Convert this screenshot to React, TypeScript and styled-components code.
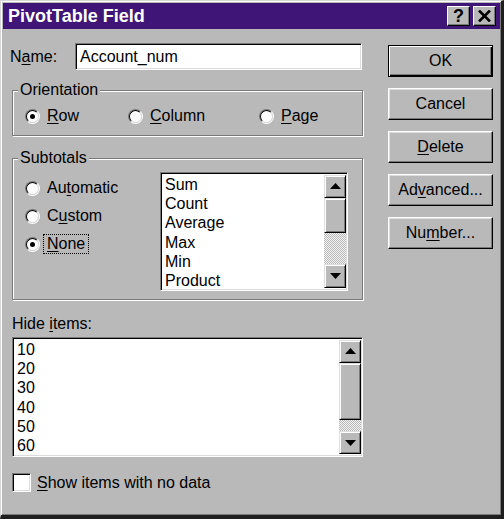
import React from "react";
import styled, { createGlobalStyle, css } from "styled-components";

const GlobalStyle = createGlobalStyle`
  html, body { margin: 0; padding: 0; background: #b9b9b9; }
  body {
    font-family: "Liberation Sans", Arial, sans-serif;
    font-size: 16px;
    color: #000;
  }
  * { box-sizing: border-box; }
`;

const BG = "#b9b9b9";

const Window = styled.div`
  width: 504px;
  height: 519px;
  background: ${BG};
  border-style: solid;
  border-width: 1px 3px 4px 1px;
  border-color: #d8d8d8 #1e1e1e #1e1e1e #d8d8d8;
  box-shadow: inset 1px 1px #fff, inset -1px -1px #7a7a7a;
  padding: 2px 1px 0 2px;
  display: flex;
  flex-direction: column;
`;

const TitleBar = styled.div`
  height: 26px;
  background: #3f1678;
  display: flex;
  align-items: center;
  padding: 0 4px 0 5px;
`;

const TitleText = styled.div`
  flex: 1;
  color: #fff;
  font-weight: bold;
  font-size: 18px;
  line-height: 20px;
`;

const TitleButtons = styled.div`
  display: flex;
  gap: 3px;
`;

const TitleButton = styled.div`
  width: 23px;
  height: 20px;
  background: ${BG};
  border: 1px solid;
  border-color: #fff #000 #000 #fff;
  box-shadow: inset -1px -1px #7a7a7a;
  display: flex;
  align-items: center;
  justify-content: center;
  font-weight: bold;
  font-size: 18px;
  line-height: 1;
`;

const Body = styled.div`
  display: flex;
  padding: 14px 0 0 7px;
`;

const LeftColumn = styled.div`
  width: 356px;
  display: flex;
  flex-direction: column;
`;

const RightColumn = styled.div`
  margin-left: 22px;
  padding-top: 2px;
  display: flex;
  flex-direction: column;
  gap: 11px;
`;

const Button = styled.div<{ $default?: boolean }>`
  width: 105px;
  height: 32px;
  background: ${BG};
  display: flex;
  align-items: center;
  justify-content: center;
  border: 1px solid;
  ${(p) =>
    p.$default
      ? css`
          border-color: #000;
          box-shadow: inset 1px 1px #fff, inset -1px -1px #000, inset -2px -2px #7a7a7a;
        `
      : css`
          border-color: #fff #000 #000 #fff;
          box-shadow: inset -1px -1px #7a7a7a, inset 1px 1px #dedede;
        `}
`;

const U = styled.span`
  text-decoration: underline;
  text-underline-offset: 2px;
`;

const NameRow = styled.div`
  display: flex;
  align-items: center;
  height: 27px;
`;

const NameLabel = styled.span`
  width: 65px;
`;

const sunken = css`
  background: #fff;
  border: 1px solid;
  border-color: #7a7a7a #fff #fff #7a7a7a;
  box-shadow: inset 1px 1px #000, inset -1px -1px #dcdcdc;
`;

const TextInput = styled.div`
  ${sunken};
  width: 287px;
  height: 27px;
  display: flex;
  align-items: center;
  padding-left: 4px;
`;

const Group = styled.fieldset<{ $top: number }>`
  margin: ${(p) => p.$top}px 0 0 2px;
  padding: 0;
  width: 351px;
  min-width: 0;
  border: 1px solid #7a7a7a;
  box-shadow: inset 1px 1px #fff, 1px 1px #fff;
`;

const Legend = styled.legend`
  margin-left: 5px;
  padding: 0 2px;
  line-height: 18px;
  height: 18px;
  background: ${BG};
`;

const OrientationRow = styled.div`
  display: grid;
  grid-template-columns: 103px 131px auto;
  padding: 8px 0 10px 12px;
`;

const SubtotalsInner = styled.div`
  display: flex;
  padding: 5px 0 8px 12px;
`;

const RadioColumn = styled.div`
  width: 135px;
  margin-top: 7px;
  display: flex;
  flex-direction: column;
  gap: 10px;
`;

const Option = styled.div`
  display: flex;
  align-items: center;
  height: 18px;
  gap: 3px;
`;

const RadioCircle = styled.span<{ $checked?: boolean }>`
  position: relative;
  width: 15px;
  height: 15px;
  flex: none;
  border-radius: 50%;
  border: 1px solid;
  border-color: #7a7a7a #fff #fff #7a7a7a;
  &::before {
    content: "";
    position: absolute;
    inset: 0;
    border-radius: 50%;
    border: 1px solid;
    border-color: #000 #dcdcdc #dcdcdc #000;
    background: #fff;
  }
  &::after {
    content: "";
    display: ${(p) => (p.$checked ? "block" : "none")};
    position: absolute;
    left: 4px;
    top: 4px;
    width: 5px;
    height: 5px;
    border-radius: 50%;
    background: #000;
  }
`;

const OptionText = styled.span<{ $focus?: boolean }>`
  padding: 0 3px;
  line-height: 18px;
  border: 1px ${(p) => (p.$focus ? "dotted #000" : "solid transparent")};
`;

const ListBox = styled.div<{ $w: number; $h: number; $ml?: number }>`
  ${sunken};
  width: ${(p) => p.$w}px;
  height: ${(p) => p.$h}px;
  margin-left: ${(p) => p.$ml ?? 0}px;
  display: flex;
  padding: 2px 1px 2px 2px;
  overflow: hidden;
`;

const Items = styled.div`
  flex: 1;
  padding-left: 2px;
  line-height: 19.2px;
`;

const ScrollBar = styled.div`
  width: 22px;
  display: flex;
  flex-direction: column;
`;

const raised = css`
  background: ${BG};
  border: 1px solid;
  border-color: #dedede #000 #000 #dedede;
  box-shadow: inset 1px 1px #fff, inset -1px -1px #7a7a7a;
`;

const ScrollButton = styled.div<{ $h: number }>`
  ${raised};
  height: ${(p) => p.$h}px;
  display: flex;
  align-items: center;
  justify-content: center;
`;

const Thumb = styled.div<{ $h: number }>`
  ${raised};
  height: ${(p) => p.$h}px;
`;

const Track = styled.div<{ $h: number }>`
  height: ${(p) => p.$h}px;
  background: repeating-conic-gradient(#b9b9b9 0% 25%, #f2f2f2 0% 50%) 0 0 / 2px 2px;
`;

const HideLabel = styled.div`
  margin: 15px 0 4px 2px;
  line-height: 18px;
`;

const CheckRow = styled.div`
  margin: 16px 0 0 2px;
  display: flex;
  align-items: center;
  gap: 6px;
  height: 19px;
`;

const CheckBox = styled.span`
  ${sunken};
  width: 19px;
  height: 19px;
`;

const Arrow = ({ up }: { up?: boolean }) => (
  <svg width="11" height="6" viewBox="0 0 11 6">
    {up ? <polygon points="5.5,0 11,6 0,6" fill="#000" /> : <polygon points="0,0 11,0 5.5,6" fill="#000" />}
  </svg>
);

const CloseGlyph = () => (
  <svg width="13" height="12" viewBox="0 0 13 12">
    <path d="M1 0.5 L12 11.5 M12 0.5 L1 11.5" stroke="#000" strokeWidth="2.6" />
  </svg>
);

const Scroll = ({ up, thumb, track, down }: { up: number; thumb: number; track: number; down: number }) => (
  <ScrollBar>
    <ScrollButton $h={up}>
      <Arrow up />
    </ScrollButton>
    <Thumb $h={thumb} />
    <Track $h={track} />
    <ScrollButton $h={down}>
      <Arrow />
    </ScrollButton>
  </ScrollBar>
);

export default function App() {
  return (
    <>
      <GlobalStyle />
      <Window>
        <TitleBar>
          <TitleText>PivotTable Field</TitleText>
          <TitleButtons>
            <TitleButton>?</TitleButton>
            <TitleButton>
              <CloseGlyph />
            </TitleButton>
          </TitleButtons>
        </TitleBar>
        <Body>
          <LeftColumn>
            <NameRow>
              <NameLabel>
                N<U>a</U>me:
              </NameLabel>
              <TextInput>Account_num</TextInput>
            </NameRow>

            <Group $top={11}>
              <Legend>Orientation</Legend>
              <OrientationRow>
                <Option>
                  <RadioCircle $checked />
                  <OptionText>
                    <U>R</U>ow
                  </OptionText>
                </Option>
                <Option>
                  <RadioCircle />
                  <OptionText>
                    <U>C</U>olumn
                  </OptionText>
                </Option>
                <Option>
                  <RadioCircle />
                  <OptionText>
                    <U>P</U>age
                  </OptionText>
                </Option>
              </OrientationRow>
            </Group>

            <Group $top={13}>
              <Legend>Subtotals</Legend>
              <SubtotalsInner>
                <RadioColumn>
                  <Option>
                    <RadioCircle />
                    <OptionText>
                      Au<U>t</U>omatic
                    </OptionText>
                  </Option>
                  <Option>
                    <RadioCircle />
                    <OptionText>
                      C<U>u</U>stom
                    </OptionText>
                  </Option>
                  <Option>
                    <RadioCircle $checked />
                    <OptionText $focus>
                      <U>N</U>one
                    </OptionText>
                  </Option>
                </RadioColumn>
                <ListBox $w={188} $h={119}>
                  <Items>
                    <div>Sum</div>
                    <div>Count</div>
                    <div>Average</div>
                    <div>Max</div>
                    <div>Min</div>
                    <div>Product</div>
                  </Items>
                  <Scroll up={23} thumb={36} track={32} down={24} />
                </ListBox>
              </SubtotalsInner>
            </Group>

            <HideLabel>
              Hide <U>i</U>tems:
            </HideLabel>
            <ListBox $w={351} $h={120} $ml={2}>
              <Items>
                <div>10</div>
                <div>20</div>
                <div>30</div>
                <div>40</div>
                <div>50</div>
                <div>60</div>
              </Items>
              <Scroll up={23} thumb={58} track={12} down={23} />
            </ListBox>

            <CheckRow>
              <CheckBox />
              <span>
                <U>S</U>how items with no data
              </span>
            </CheckRow>
          </LeftColumn>

          <RightColumn>
            <Button $default>OK</Button>
            <Button>Cancel</Button>
            <Button>
              <U>D</U>elete
            </Button>
            <Button>
              Ad<U>v</U>anced...
            </Button>
            <Button>
              Nu<U>m</U>ber...
            </Button>
          </RightColumn>
        </Body>
      </Window>
    </>
  );
}
